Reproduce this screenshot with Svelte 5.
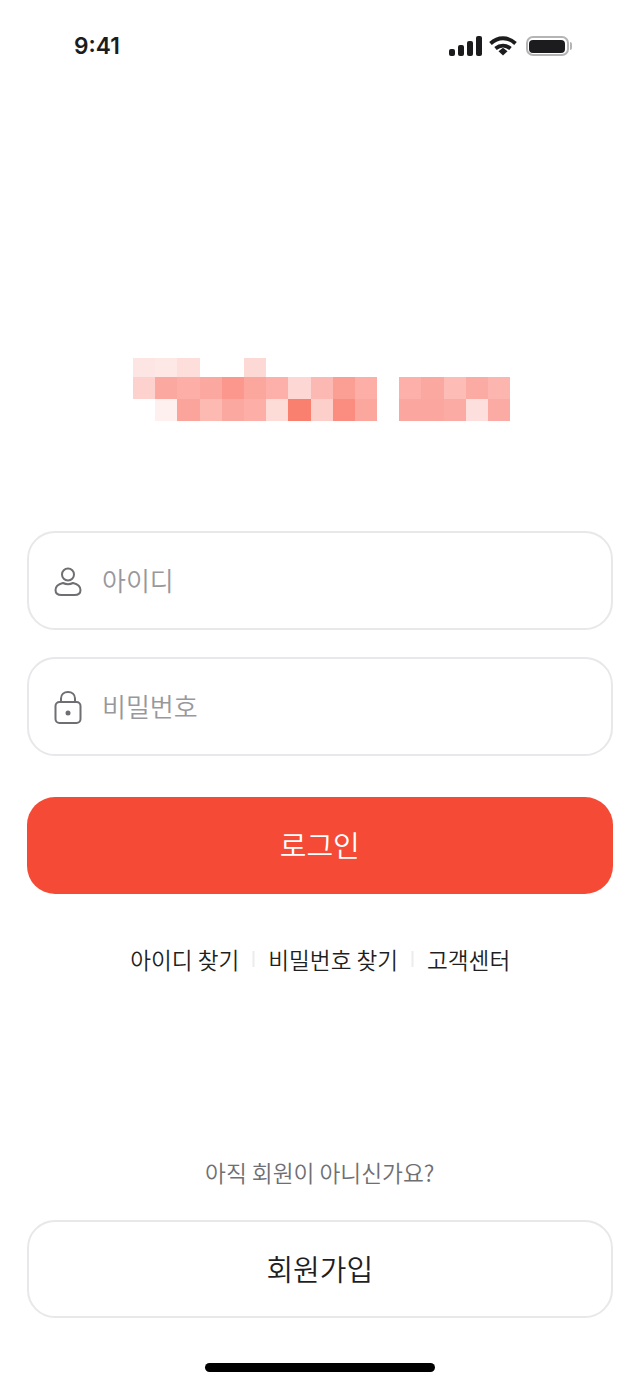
<script>
  // blurred logo, one entry per cell: row by row, null = empty
  const logoCells = [
    "#fde5e4", "#fde8e6", "#fddedb", null, null, "#fdd9d6", null, null, null, null, null, null, null, null, null, null, null,
    "#fdd2ce", "#fba8a0", "#fcaea7", "#fba8a0", "#fb978d", "#fba79d", "#fcb0a9", "#fdd7d3", "#fcb9b3", "#fb9f95", "#fcaea7", null, "#fcb0a9", "#fba8a0", "#fdbdb6", "#fbaba4", "#fcb5af",
    null, "#fef0ee", "#fba49b", "#fcbab3", "#fba8a1", "#fcaea7", "#fddcd8", "#f97f6e", "#fdcfca", "#fa8d80", "#fba79e", null, "#fba79f", "#fba79f", "#fbaba4", "#fde0dd", "#fbaba3"
  ];
  const links = ["아이디 찾기", "비밀번호 찾기", "고객센터"];
</script>

<div class="screen">
  <div class="status">
    <span class="time">9:41</span>
    <div class="status-icons">
      <svg width="33" height="20" viewBox="0 0 33 20" fill="#1c1c1e">
        <rect x="0" y="13" width="6" height="7" rx="2" />
        <rect x="9" y="9" width="6" height="11" rx="2" />
        <rect x="18" y="5" width="6" height="15" rx="2" />
        <rect x="27" y="0" width="6" height="20" rx="2" />
      </svg>
      <svg width="28" height="20" viewBox="0 0 28 20" fill="none" stroke="#1c1c1e" stroke-width="3.8">
        <path d="M1.500 7.500C9 0.500 19 0.500 26.500 7.500" />
        <path d="M6.500 12.500C11 8.800 17 8.800 21.500 12.500" />
        <path d="M9.500 15.200L14 11.800L18.500 15.200L14 19.600Z" fill="#1c1c1e" stroke="none" />
      </svg>
      <div class="battery">
        <div class="battery-fill"></div>
        <div class="battery-cap"></div>
      </div>
    </div>
  </div>

  <div class="logo">
    {#each logoCells as color}
      <span style:background={color}></span>
    {/each}
  </div>

  <div class="field">
    <svg width="32" height="32" viewBox="0 0 32 32" fill="none" stroke="#6f6f73" stroke-width="2">
      <circle cx="16" cy="9.500" r="6" />
      <path d="M11 18C7 19 3.500 21 3.500 25C3.500 28.500 6 30 9.500 30H22.500C26 30 28.500 28.500 28.500 25C28.500 21 25 19 21 18C18 19.500 14 19.500 11 18Z" />
    </svg>
    <span>아이디</span>
  </div>

  <div class="field second">
    <svg width="32" height="36" viewBox="0 0 32 36" fill="none" stroke="#6f6f73" stroke-width="2">
      <path d="M9 13V9.500C9 5.500 12 3 16 3C20 3 23 5.500 23 9.500V13" />
      <rect x="3.500" y="13" width="25" height="21" rx="4" />
      <circle cx="16" cy="24" r="2.500" fill="#6f6f73" stroke="none" />
    </svg>
    <span>비밀번호</span>
  </div>

  <div class="login">로그인</div>

  <div class="links">
    {#each links as link, i}
      {#if i > 0}<i></i>{/if}
      <span>{link}</span>
    {/each}
  </div>

  <p class="ask">아직 회원이 아니신가요?</p>
  <div class="signup">회원가입</div>

  <div class="home"></div>
</div>

<style>
  :global(body) {
    background: #fff;
  }

  .screen {
    width: 640px;
    height: 1386px;
    box-sizing: border-box;
    padding: 0 27.500px 0 27px;
    overflow: hidden;
    display: flex;
    flex-direction: column;
    font-family: "Noto Sans CJK KR", "Noto Sans", sans-serif;
    font-weight: 350;
  }

  .status {
    height: 36px;
    margin: 28px 44px 0 47px;
    display: flex;
    align-items: center;
    justify-content: space-between;
  }

  .time {
    font-family: Inter, sans-serif;
    font-size: 22.700px;
    font-weight: 600;
    color: #1c1c1e;
    margin-bottom: 2px;
  }

  .status-icons {
    display: flex;
    align-items: center;
    gap: 7px;
  }

  .battery {
    position: relative;
    width: 43px;
    height: 20px;
    margin-left: 2px;
    box-sizing: border-box;
    border: 2px solid #b4b4b4;
    border-radius: 7px;
    padding: 1.500px;
  }

  .battery-fill {
    height: 100%;
    background: #1c1c1e;
    border-radius: 4px;
  }

  .battery-cap {
    position: absolute;
    right: -5px;
    top: 4px;
    width: 2px;
    height: 8px;
    background: #b4b4b4;
    border-radius: 0 2px 2px 0;
  }

  .logo {
    display: grid;
    grid-template-columns: repeat(17, 22.200px);
    grid-template-rows: 19px 22px 22px;
    margin: 294px 0 0 106px;
  }

  .field {
    height: 99px;
    box-sizing: border-box;
    margin-top: 110px;
    padding: 0 0 2px 23px;
    border: 2px solid #e8e8ea;
    border-radius: 28px;
    display: flex;
    align-items: center;
    gap: 18px;
    font-size: 26px;
    color: #98989c;
  }

  .field svg {
    margin-bottom: -2px;
  }

  .field.second {
    margin-top: 27px;
  }

  .login {
    height: 97px;
    box-sizing: border-box;
    padding-bottom: 3px;
    margin-top: 41px;
    border-radius: 28px;
    background: #f54b36;
    color: #fff;
    font-size: 29px;
    display: flex;
    align-items: center;
    justify-content: center;
  }

  .links {
    margin-top: 46px;
    height: 38px;
    display: flex;
    align-items: center;
    justify-content: center;
    gap: 13.500px;
    font-size: 22.600px;
    color: #1f1f1f;
    transform: translateX(0.500px);
  }

  .links i {
    width: 2px;
    height: 16px;
    background: #ececee;
  }

  .ask {
    margin: 172px 0 0;
    height: 46px;
    line-height: 46px;
    text-align: center;
    font-size: 22.700px;
    color: #6f6f73;
  }

  .signup {
    height: 98px;
    box-sizing: border-box;
    padding-bottom: 2px;
    margin-top: 24px;
    border: 2px solid #e8e8ea;
    border-radius: 28px;
    color: #1f1f1f;
    font-size: 29px;
    display: flex;
    align-items: center;
    justify-content: center;
  }

  .home {
    width: 230px;
    height: 9px;
    margin: 45px auto 0;
    border-radius: 5px;
    background: #000;
  }
</style>
